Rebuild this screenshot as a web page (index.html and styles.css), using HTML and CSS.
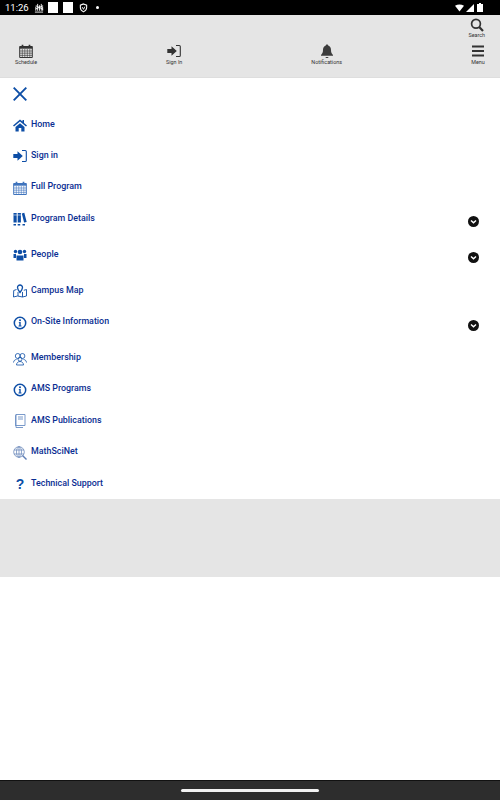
FILE: index.html
```html
<!DOCTYPE html>
<html lang="en">
<head>
    <meta charset="UTF-8">
    <meta name="viewport" content="width=device-width, initial-scale=1.0">
    <title>Menu</title>
    <link rel="stylesheet" href="styles.css">
</head>
<body>
    <!-- Android status bar -->
    <div class="status-bar">
        <span class="clock">11:26</span>
        <svg class="st-icon" viewBox="0 0 11 11" width="10" height="10"><path d="M1 10h9M2 8.500V4M4 8.500V1M6 8.500V2.500M8 8.500V1M9.500 8.500V4M2 6.500l8-3.500M2 3l8 4" stroke="#fff" stroke-width="1" fill="none"/></svg>
        <span class="st-square"></span>
        <span class="st-square"></span>
        <svg class="st-icon st-shield" viewBox="0 0 10 11" width="9" height="10"><path d="M5 1l3.500 1.300v3c0 2-1.500 3.500-3.500 4.500-2-1-3.500-2.500-3.500-4.500v-3z" stroke="#fff" stroke-width="1.200" fill="none"/><path d="M3.500 4.500l1.500 2.500 1.500-3" stroke="#fff" stroke-width="1" fill="none"/></svg>
        <span class="st-dot"></span>
        <span class="st-right">
            <svg viewBox="0 0 10 8" width="9" height="8"><path d="M0 1.500Q5-1.500 10 1.500L5 8z" fill="#fff"/></svg>
            <svg viewBox="0 0 8 8" width="8" height="8"><path d="M8 0v8H0z" fill="#fff"/></svg>
            <svg class="st-batt" viewBox="0 0 6 9" width="6" height="9"><path d="M2 0h2v1h2v8H0V1h2z" fill="#fff"/></svg>
        </span>
    </div>

    <!-- Top toolbar -->
    <header class="toolbar">
        <div class="toolbar-top">
            <a class="tool">
                <svg viewBox="0 0 14 14" width="14" height="14"><circle cx="6" cy="5.800" r="4.400" fill="none" stroke="#333" stroke-width="1.700"/><path d="M9.200 9l3.800 4" stroke="#333" stroke-width="2.200"/></svg>
                <span>Search</span>
            </a>
        </div>
        <div class="toolbar-main">
            <a class="tool">
                <svg viewBox="0 0 14 14" width="14" height="14"><use href="#ic-cal"/></svg>
                <span>Schedule</span>
            </a>
            <a class="tool">
                <svg viewBox="0 0 14 14" width="14" height="14"><use href="#ic-signin"/></svg>
                <span>Sign In</span>
            </a>
            <a class="tool">
                <svg viewBox="0 0 14 14" width="14" height="14"><path d="M7 0.500c.8 0 1.200.5 1.200 1 2 .6 2.800 2.300 2.800 4.500 0 2.500.8 3.700 2 5v.800H1V11c1.200-1.300 2-2.500 2-5 0-2.200.8-3.900 2.800-4.500 0-.5.400-1 1.200-1zM5.500 13h3c0 .6-.7 1-1.500 1s-1.500-.4-1.500-1z" fill="#3c3c3c"/></svg>
                <span>Notifications</span>
            </a>
            <a class="tool">
                <svg viewBox="0 0 14 14" width="14" height="14"><path d="M1 2.500h12M1 7h12M1 11.500h12" stroke="#333" stroke-width="1.900"/></svg>
                <span>Menu</span>
            </a>
        </div>
    </header>

    <nav class="menu">
        <svg class="close" viewBox="0 0 14 14" width="14" height="14"><path d="M0.700 0.700l12.600 12.600M13.300 0.700L0.700 13.300" stroke="#0d4ea6" stroke-width="1.900"/></svg>

        <a class="item">
            <svg class="ic" viewBox="0 0 14 14"><path d="M7 1.500L0 7.500l1 1 6-5 6 5 1-1-3-2.600V2H9.500v1.600zM2.500 9L7 5.200 11.500 9v4.500H8.300V10H5.700v3.500H2.500z" fill="#0d4ea6"/></svg>
            <span>Home</span>
        </a>
        <a class="item">
            <svg class="ic ic-blue" viewBox="0 0 14 14"><use href="#ic-signin"/></svg>
            <span>Sign in</span>
        </a>
        <a class="item">
            <svg class="ic ic-pale" viewBox="0 0 14 14"><use href="#ic-cal"/></svg>
            <span>Full Program</span>
        </a>
        <a class="item has-sub">
            <svg class="ic" viewBox="0 0 14 14"><path d="M0.500 1h3.200v9.500H0.500zM4.700 1h3.200v9.500H4.700zM8.800 1.400l2.500-.6 2.400 9.200-2.600.6zM0.500 12h2.500v1.400H0.500zM4.700 12h2.500v1.400H4.700zM9.500 12H12v1.400H9.500z" fill="#0d4ea6"/><path d="M0.500 3h7.400" stroke="#fff" stroke-width=".6"/></svg>
            <span>Program Details</span>
            <svg class="chev" viewBox="0 0 11 11"><circle cx="5.500" cy="5.500" r="5.500" fill="#111"/><path d="M3 4.500l2.500 2.300L8 4.500" stroke="#fff" stroke-width="1.500" fill="none"/></svg>
        </a>
        <a class="item has-sub">
            <svg class="ic" viewBox="0 0 14 14"><circle cx="7" cy="4" r="2.300" fill="#0d4ea6"/><circle cx="2.500" cy="3.500" r="1.700" fill="#0d4ea6"/><circle cx="11.500" cy="3.500" r="1.700" fill="#0d4ea6"/><path d="M3.500 7.500h7v5h-7zM0.500 6h2.500v4H0.500zM11 6h2.500v4H11z" fill="#0d4ea6"/></svg>
            <span>People</span>
            <svg class="chev" viewBox="0 0 11 11"><circle cx="5.500" cy="5.500" r="5.500" fill="#111"/><path d="M3 4.500l2.500 2.300L8 4.500" stroke="#fff" stroke-width="1.500" fill="none"/></svg>
        </a>
        <a class="item">
            <svg class="ic" viewBox="0 0 14 14"><path d="M3.500 5.500L0.700 6.500 0.500 13l4-1 5 1 4-1V5.500l-2.700.8M5 12V8M9.500 13V8" fill="none" stroke="#0d4ea6" stroke-width=".9"/><path d="M7 1a2.500 2.500 0 0 1 2.500 2.500C9.500 5.300 7 8.500 7 8.500S4.500 5.300 4.500 3.500A2.500 2.500 0 0 1 7 1z" fill="none" stroke="#0d4ea6" stroke-width="1.300"/></svg>
            <span>Campus Map</span>
        </a>
        <a class="item has-sub">
            <svg class="ic" viewBox="0 0 14 14"><use href="#ic-info"/></svg>
            <span>On-Site Information</span>
            <svg class="chev" viewBox="0 0 11 11"><circle cx="5.500" cy="5.500" r="5.500" fill="#111"/><path d="M3 4.500l2.500 2.300L8 4.500" stroke="#fff" stroke-width="1.500" fill="none"/></svg>
        </a>
        <a class="item">
            <svg class="ic" viewBox="0 0 14 14"><g fill="none" stroke="#0d4ea6" stroke-width=".8"><circle cx="4.800" cy="4" r="2.500"/><circle cx="9.400" cy="4" r="2.500"/><circle cx="7" cy="7.200" r="2"/><path d="M0.500 10.500c.3-2 1.500-3 3-3M13.500 10.500c-.3-2-1.500-3-3-3M3.500 13c0-2 1.500-3.500 3.500-3.500s3.500 1.500 3.500 3.500z"/></g></svg>
            <span>Membership</span>
        </a>
        <a class="item">
            <svg class="ic" viewBox="0 0 14 14"><use href="#ic-info"/></svg>
            <span>AMS Programs</span>
        </a>
        <a class="item">
            <svg class="ic" viewBox="0 0 14 14"><path d="M3 0.500h9v11H3zM3 11.500v2h7M3 0.500L2.500 2v10" fill="none" stroke="#6b8fc4" stroke-width=".9"/><path d="M5 3h5M5 5h5" stroke="#6b8fc4" stroke-width=".9"/></svg>
            <span>AMS Publications</span>
        </a>
        <a class="item">
            <svg class="ic" viewBox="0 0 14 14"><g fill="none" stroke="#5f7fb5" stroke-width=".7"><circle cx="6" cy="6" r="5.300"/><ellipse cx="6" cy="6" rx="2.500" ry="5.300"/><path d="M1 4h10M1 8h10M6 .7v10.600"/></g><path d="M9.500 9.500l4 4" stroke="#5f7fb5" stroke-width="1.400"/></svg>
            <span>MathSciNet</span>
        </a>
        <a class="item">
            <b class="ic qmark">?</b>
            <span>Technical Support</span>
        </a>
    </nav>

    <div class="band"></div>
    <div class="spacer"></div>

    <!-- Android navigation bar -->
    <div class="nav-bar"><span class="handle"></span></div>

    <!-- Shared icon shapes -->
    <svg class="defs" width="0" height="0">
        <symbol id="ic-cal" viewBox="0 0 14 14">
            <path d="M0.700 2.500h12.600v11H0.700z" fill="none" stroke="currentColor" stroke-width="1"/>
            <path d="M0.700 2.500h12.600v2.200H0.700z" fill="currentColor"/>
            <path d="M1 7h12M1 9.200h12M1 11.400h12M3.300 5v8M5.800 5v8M8.300 5v8M10.800 5v8" stroke="currentColor" stroke-width=".6"/>
            <path d="M3.500 .8v3M10.500 .8v3" stroke="currentColor" stroke-width="1.700"/>
        </symbol>
        <symbol id="ic-signin" viewBox="0 0 14 14">
            <path d="M0.300 5h4.200V2.300L9.800 7l-5.300 4.700V9H0.300z" fill="currentColor"/>
            <path d="M9 1.500h3.200c.7 0 1.100.4 1.100 1.100v8.800c0 .7-.4 1.100-1.100 1.100H9" fill="none" stroke="currentColor" stroke-width="1.100"/>
        </symbol>
        <symbol id="ic-info" viewBox="0 0 14 14">
            <circle cx="7" cy="7" r="5.700" fill="none" stroke="#0d4ea6" stroke-width="1.500"/>
            <circle cx="7" cy="4.300" r="1" fill="#0d4ea6"/>
            <path d="M5.800 6h1.900v3.600h.8v.8h-3v-.8h.8V6.800h-.5z" fill="#0d4ea6"/>
        </symbol>
    </svg>
</body>
</html>
```

FILE: styles.css
```css
* {
    box-sizing: border-box;
}
body {
    margin: 0;
    height: 800px;
    display: flex;
    flex-direction: column;
    font-family: Roboto, "Liberation Sans", sans-serif;
    background-color: #fff;
    overflow: hidden;
}
.defs {
    position: absolute;
}
.status-bar {
    height: 15px;
    flex: none;
    display: flex;
    align-items: center;
    padding: 0 17px 0 5px;
    background-color: #000;
    color: #fff;
}
.clock {
    font-size: 9.500px;
    margin-right: 5px;
}
.st-icon {
    margin-right: 4px;
}
.st-shield {
    margin-left: 1px;
}
.st-square {
    width: 10.500px;
    height: 11px;
    margin-right: 4.500px;
    background-color: #fff;
}
.st-dot {
    width: 3px;
    height: 3px;
    margin-left: 4px;
    border-radius: 50%;
    background-color: #fff;
}
.st-right {
    margin-left: auto;
    display: flex;
    align-items: center;
    gap: 1.500px;
}
.st-batt {
    margin-left: 2px;
}
.toolbar {
    height: 63px;
    flex: none;
    padding: 3px 15px 0;
    background-color: #e5e5e5;
    border-bottom: 1px solid #dedede;
}
.toolbar-top {
    display: flex;
    justify-content: flex-end;
}
.toolbar-main {
    display: flex;
    justify-content: space-between;
    margin-top: 6px;
}
.tool {
    display: flex;
    flex-direction: column;
    align-items: center;
    color: #333;
    font-size: 5.400px;
    line-height: 6px;
}
.tool svg {
    display: block;
    margin-bottom: 1px;
}
.toolbar-top .tool svg {
    margin-bottom: 0;
}
.menu {
    flex: none;
    padding: 9px 21px 0 13px;
    color: #0d4ea6;
}
.close {
    display: block;
    margin-bottom: 13px;
}
.item {
    display: flex;
    align-items: flex-start;
    height: 31.400px;
    color: #0a2e92;
    font-size: 8.900px;
    font-weight: 500;
    line-height: 12px;
}
.item > span {
    margin-top: 3.500px;
}
.item.has-sub {
    height: 36px;
}
.item:last-child {
    height: 25.800px;
}
.ic {
    width: 14px;
    height: 14px;
    flex: none;
    margin: 4px 4px 0 0;
}
.ic-blue {
    color: #0d4ea6;
}
.ic-pale {
    color: #3f74bd;
}
.chev {
    width: 11px;
    height: 11px;
    margin: 8px 0 0 auto;
}
.qmark {
    font-family: "Liberation Sans", sans-serif;
    font-size: 14px;
    line-height: 15px;
    text-align: center;
    color: #0d4ea6;
}
.band {
    height: 78px;
    flex: none;
    background-color: #e5e5e5;
}
.spacer {
    flex: 1;
}
.nav-bar {
    height: 20px;
    flex: none;
    display: flex;
    align-items: center;
    justify-content: center;
    background-color: #2d2d2d;
    border-top: 1px solid #111;
}
.handle {
    width: 138px;
    height: 3px;
    border-radius: 2px;
    background-color: #f2f2f2;
}
```
